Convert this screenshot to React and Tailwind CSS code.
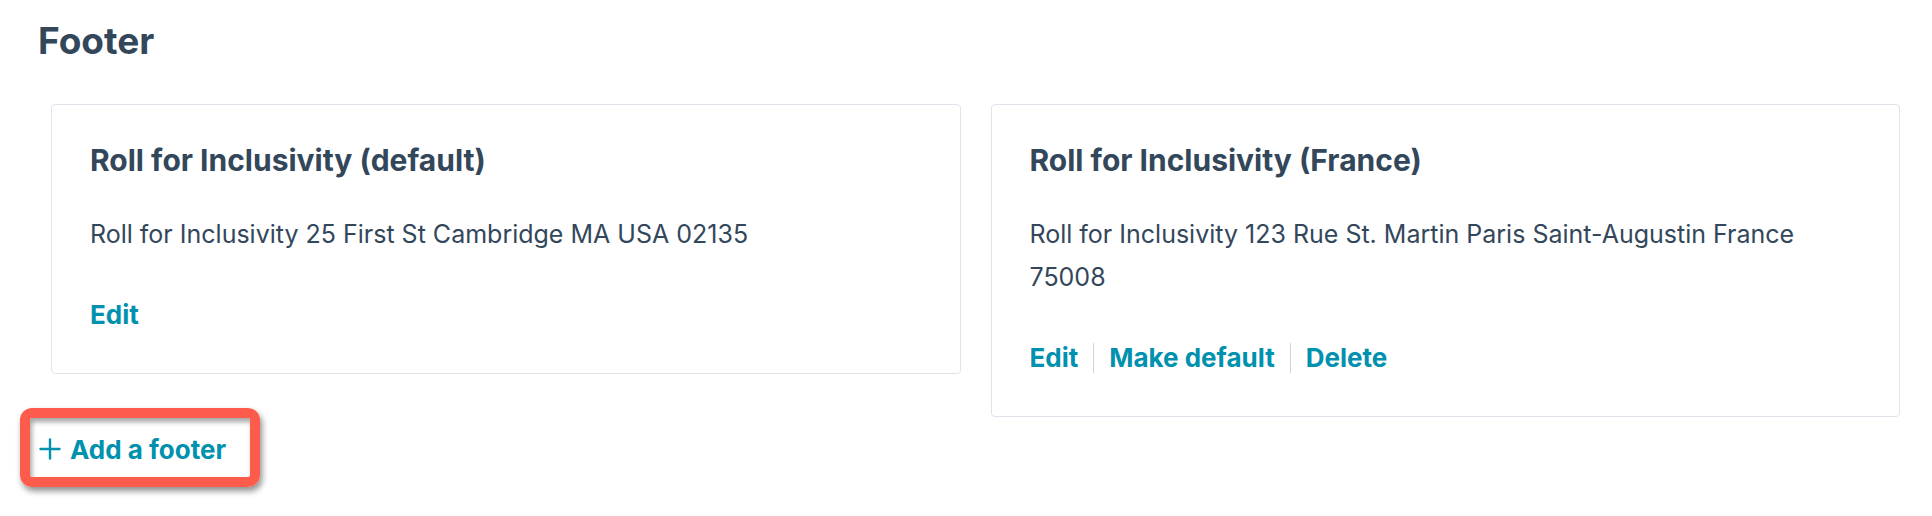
import React from "react";

const footers = [
    {
        id: "default",
        name: "Roll for Inclusivity (default)",
        address: "Roll for Inclusivity 25 First St Cambridge MA USA 02135",
        actions: ["Edit"],
    },
    {
        id: "france",
        name: "Roll for Inclusivity (France)",
        address: "Roll for Inclusivity 123 Rue St. Martin Paris Saint-Augustin France 75008",
        actions: ["Edit", "Make default", "Delete"],
    },
];

const PlusIcon = () => (
    <svg width="22" height="22" viewBox="0 0 22 22" fill="none" stroke="#0091ae" strokeWidth="2.4" strokeLinecap="round">
        <line x1="11" y1="1.5" x2="11" y2="20.5" />
        <line x1="1.5" y1="11" x2="20.5" y2="11" />
    </svg>
);

const FooterCard = ({ footer }) => (
    <div className="w-full bg-white border border-[#dfe3eb] rounded-[4px] px-[38px] pt-[37px] pb-[42px]">
        <h3 className="text-[30px] leading-[36px] font-bold text-[#33475b]">{footer.name}</h3>
        <p className="mt-[35px] max-w-[795px] text-[25px] leading-[43px] text-[#33475b]">{footer.address}</p>
        <div className="mt-[43px] flex items-center">
            {footer.actions.map((action, i) => (
                <React.Fragment key={action}>
                    {i > 0 && <span className="mx-[15px] w-px h-[30px] bg-[#cbd6e2]" />}
                    <button type="button" className="text-[26px] leading-[32px] font-bold text-[#0091ae]">
                        {action}
                    </button>
                </React.Fragment>
            ))}
        </div>
    </div>
);

export default function App() {
    return (
        <div className="min-h-screen bg-white font-[Inter,sans-serif] pl-[20px] pr-[32px] pt-[18px]">
            <h2 className="pl-[18px] text-[37px] leading-[46px] font-bold text-[#33475b]">Footer</h2>

            <div className="mt-[40px] ml-[31px] grid grid-cols-2 gap-[30px] items-start">
                <div className="flex flex-col items-start">
                    <FooterCard footer={footers[0]} />
                    <div className="-ml-[31px] mt-[34px] inline-flex border-[10px] border-[#fd5c4c] rounded-[12px] shadow-[2px_4px_6px_rgba(0,0,0,0.45),inset_2px_4px_5px_rgba(0,0,0,0.35)]">
                        <button type="button" className="h-[59px] w-[220px] flex items-center gap-[9px] pl-[9px] pt-[3px] text-[26px] font-bold text-[#0091ae] whitespace-nowrap">
                            <PlusIcon />
                            <span>Add a footer</span>
                        </button>
                    </div>
                </div>
                <FooterCard footer={footers[1]} />
            </div>
        </div>
    );
}
